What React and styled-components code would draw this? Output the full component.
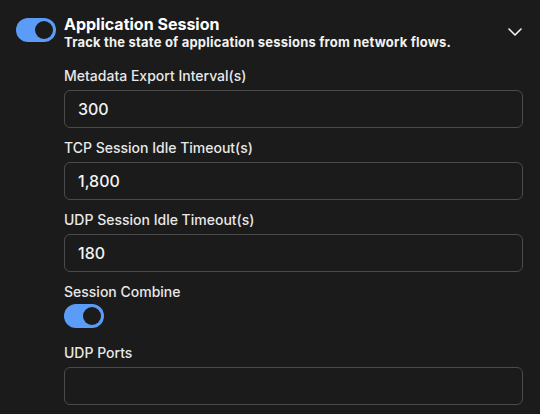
import React from 'react';
import styled, { createGlobalStyle } from 'styled-components';

const GlobalStyle = createGlobalStyle`
  body {
    margin: 0;
    background-color: #1b1b1b;
    font-family: Inter, "Noto Sans", sans-serif;
  }
`;

const Panel = styled.div`
  width: 540px;
  height: 414px;
  box-sizing: border-box;
  padding: 14px 17px 0 16px;
  background-color: #1b1b1b;
  overflow: hidden;
`;

const Header = styled.div`
  display: flex;
  align-items: flex-start;
  gap: 8px;
`;

const Track = styled.div`
  flex: none;
  width: 40px;
  height: 24px;
  box-sizing: border-box;
  padding: 3px;
  border-radius: 12px;
  background-color: ${(p) => (p.$on ? '#5a9cf8' : '#444')};
  display: flex;
  justify-content: ${(p) => (p.$on ? 'flex-end' : 'flex-start')};
  align-items: center;
  margin-top: ${(p) => p.$top || 0}px;
`;

const Knob = styled.div`
  width: 18px;
  height: 18px;
  border-radius: 50%;
  background-color: #1b1b1b;
`;

const HeaderText = styled.div`
  flex: 1;
`;

const Title = styled.h1`
  margin: 0;
  font-size: 16px;
  line-height: 20px;
  font-weight: 700;
  color: #ffffff;
`;

const Subtitle = styled.p`
  margin: 0;
  font-size: 13px;
  line-height: 16px;
  letter-spacing: 0.2px;
  font-weight: 700;
  color: #f2f2f2;
`;

const Chevron = styled.svg`
  flex: none;
  margin-top: 14px;
  margin-right: 1px;
`;

const Fields = styled.div`
  display: flex;
  flex-direction: column;
  margin: 16px 0 0 48px;
`;

const Field = styled.div`
  display: flex;
  flex-direction: column;
  margin-bottom: ${(p) => p.$gap}px;
`;

const Label = styled.label`
  font-size: 14px;
  line-height: 20px;
  font-weight: 500;
  color: #e8e8e8;
  margin-bottom: ${(p) => p.$space}px;
`;

const Input = styled.input`
  height: 38px;
  box-sizing: border-box;
  padding: 0 13px;
  border: 1px solid #4b4b4b;
  border-radius: 6px;
  background-color: #1b1b1b;
  color: #f2f2f2;
  font-family: Inter, "Noto Sans", sans-serif;
  font-size: 16px;
  font-weight: 500;
  outline: none;
`;

function Toggle({ on, top }) {
  return (
    <Track $on={on} $top={top}>
      <Knob />
    </Track>
  );
}

const textFields = [
  { label: 'Metadata Export Interval(s)', value: '300' },
  { label: 'TCP Session Idle Timeout(s)', value: '1,800' },
  { label: 'UDP Session Idle Timeout(s)', value: '180' },
];

export default function App() {
  return (
    <Panel>
      <GlobalStyle />
      <Header>
        <Toggle on top={4} />
        <HeaderText>
          <Title>Application Session</Title>
          <Subtitle>Track the state of application sessions from network flows.</Subtitle>
        </HeaderText>
        <Chevron width="14" height="8" viewBox="0 0 14 8" fill="none">
          <path d="M1 1l6 6 6-6" stroke="#f2f2f2" strokeWidth="1.6" strokeLinecap="round" strokeLinejoin="round" />
        </Chevron>
      </Header>
      <Fields>
        {textFields.map((f) => (
          <Field key={f.label} $gap={10}>
            <Label $space={4}>{f.label}</Label>
            <Input defaultValue={f.value} />
          </Field>
        ))}
        <Field $gap={15}>
          <Label $space={2}>Session Combine</Label>
          <Toggle on />
        </Field>
        <Field $gap={0}>
          <Label $space={4}>UDP Ports</Label>
          <Input defaultValue="" />
        </Field>
      </Fields>
    </Panel>
  );
}
